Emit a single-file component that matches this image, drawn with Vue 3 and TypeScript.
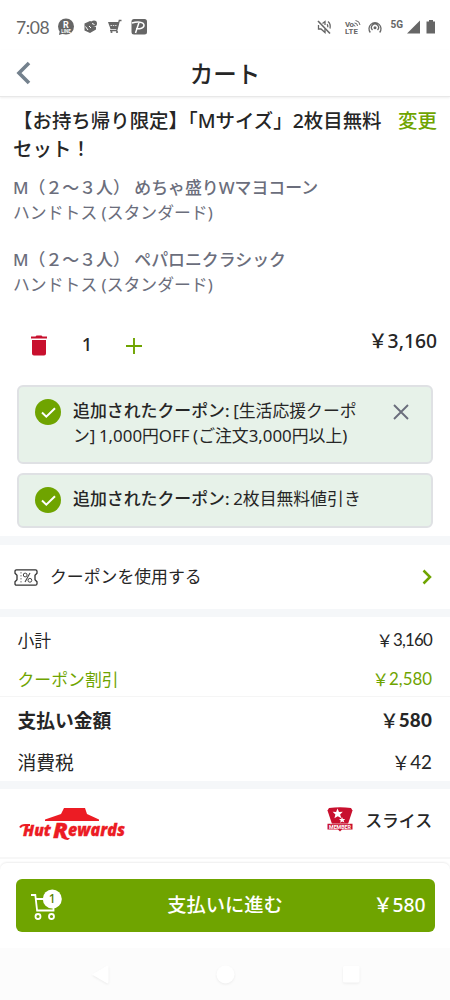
<script setup lang="ts">
interface Pizza { name: string; crust: string }
interface Coupon { id: number; text: string; removable: boolean }
interface Total { label: string; amount: string; kind: string }

const pizzas: Pizza[] = [
  { name: 'M（２～３人） めちゃ盛りWマヨコーン', crust: 'ハンドトス (スタンダード)' },
  { name: 'M（２～３人） ペパロニクラシック', crust: 'ハンドトス (スタンダード)' },
]
const coupons: Coupon[] = [
  { id: 1, text: '[生活応援クーポン] 1,000円OFF (ご注文3,000円以上)', removable: true },
  { id: 2, text: '2枚目無料値引き', removable: false },
]
const totals: Total[] = [
  { label: '小計', amount: '3,160', kind: 'subtotal' },
  { label: 'クーポン割引', amount: '2,580', kind: 'discount' },
  { label: '支払い金額', amount: '580', kind: 'due' },
  { label: '消費税', amount: '42', kind: 'tax' },
]
</script>

<template>
  <div class="screen">
    <div class="status">
      <span class="time">7:08</span>
      <svg class="s-left" width="92" height="18" viewBox="0 0 92 18">
        <circle cx="9" cy="8.5" r="8" fill="#666" />
        <path d="M3 12 2 17l6-2z" fill="#666" />
        <text x="9" y="9.5" class="r-mark" text-anchor="middle">R</text>
        <text x="9" y="14.5" class="r-sub" text-anchor="middle">LINE</text>
        <path d="M27.500 5.500 33 3l3 1v4l3 1v2.500l-6 3.500-5.500-2.500z" fill="#666" />
        <circle cx="37" cy="5.500" r="3" fill="#666" />
        <path d="M28.500 8.500l2.500 3.500M32 8l2 2M35 5.500l2.500 1" stroke="#fff" stroke-width="1" fill="none" />
        <path d="M51 4h11l-1.800 7H53.500z" fill="#666" />
        <path d="M64.500 2.500h-2.200l-2.600 10H53" stroke="#666" stroke-width="1.300" fill="none" />
        <path d="M53.500 7.500h6" stroke="#ddd" stroke-width="1" stroke-dasharray="1.500 .8" />
        <circle cx="54.500" cy="14" r="1.100" fill="#666" /><circle cx="60" cy="14" r="1.100" fill="#666" />
        <rect x="74.500" y="1" width="15.500" height="15.500" rx="2.500" fill="#666" />
        <path d="M75 5c5-1.500 12-1.500 12 2.300 0 3-4 3.700-8 3.500M82 4.500 78.500 15" fill="none" stroke="#fff" stroke-width="1.500" />
      </svg>
      <svg class="s-right" width="118" height="18" viewBox="0 0 118 18">
        <g fill="none" stroke="#666" stroke-width="1.300">
          <path d="M1 3 13 15.500" stroke-width="1.600" />
          <path d="M1.500 7v4h2.500l4 3.500V11M5.500 5.500 8 3.500V7M10 6.200q1 1 .8 3M11 3.500q3 2.500 2 7" />
          <path d="M53.300 14.500a6 6 0 1 1 9.400 0M55.500 12a3.500 3.500 0 1 1 5 0" />
          <path d="M37.500 5q3 0 3 3M38.500 2.500q4 .3 4.500 4.500M36.500 7q1.500 0 1.500 1.500" stroke-width="1" />
        </g>
        <circle cx="58" cy="9.800" r="1.500" fill="#666" />
        <text x="28" y="8.500" class="lte" textLength="9">Vo</text>
        <text x="28" y="15.800" class="lte" textLength="13">LTE</text>
        <text x="73.500" y="9.500" class="fiveg" textLength="12.500">5G</text>
        <path d="M90 15.500 103 2.500v13z" fill="#666" />
        <path d="M109.500 3.500h2.500V2h4v1.500h2v12h-8.500z" fill="#666" />
      </svg>
    </div>

    <header class="header">
      <svg class="back" width="16" height="24" viewBox="0 0 16 24"><path d="M14 2 4 12l10 10" fill="none" stroke="#74818d" stroke-width="3.600" /></svg>
      <h1>カート</h1>
    </header>

    <main>
      <section class="item">
        <div class="title-row">
          <h2>【お持ち帰り限定】「Mサイズ」2枚目無料<br>セット！</h2>
          <a class="change">変更</a>
        </div>
        <div v-for="pizza in pizzas" :key="pizza.name" class="pizza">
          <strong>{{ pizza.name }}</strong>
          <span>{{ pizza.crust }}</span>
        </div>
        <div class="quantity">
          <svg width="16" height="21" viewBox="0 0 16 21"><path d="M0 1.500h4.500L5.500.4h5l1 1.100H16v2H0zM1 5h14v13.500a2 2 0 0 1-2 2H3a2 2 0 0 1-2-2z" fill="#c8102e" /></svg>
          <span class="count">1</span>
          <svg class="plus" width="16" height="16" viewBox="0 0 16 16"><path d="M8 0v16M0 8h16" stroke="#6fa400" stroke-width="1.900" /></svg>
          <span class="price">￥3,160</span>
        </div>
      </section>

      <section class="coupons">
        <div v-for="coupon in coupons" :key="coupon.id" class="coupon">
          <svg class="check" width="26" height="26" viewBox="0 0 26 26"><circle cx="13" cy="13" r="13" fill="#6fa400" /><path d="M7 13.500l4.300 4.200L20 9.200" fill="none" stroke="#fff" stroke-width="2" /></svg>
          <p><b>追加されたクーポン:</b> {{ coupon.text }}</p>
          <svg v-if="coupon.removable" class="close" width="16" height="16" viewBox="0 0 16 16"><path d="M1 1l14 14M15 1 1 15" stroke="#6b6e7c" stroke-width="1.900" /></svg>
        </div>
      </section>

      <section class="use-coupon">
        <svg width="24" height="17" viewBox="0 0 24 17">
          <path d="M2.500.8h19q1.500 0 1.500 1.500v2l-2 2v4.400l2 2v2q0 1.500-1.500 1.500h-19Q1 16.200 1 14.700v-2l2-2V6.300l-2-2v-2Q1 .8 2.500.8z" fill="none" stroke="#333" stroke-width="1.300" stroke-linejoin="round" />
          <path d="M7 3v12" stroke="#777" stroke-width="1" stroke-dasharray="1.500 1.500" />
          <path d="M16 4 11 13" stroke="#444" stroke-width="1.100" />
          <circle cx="11.200" cy="6" r="1.900" fill="none" stroke="#444" /><circle cx="15.900" cy="11.300" r="1.900" fill="none" stroke="#444" />
        </svg>
        <span>クーポンを使用する</span>
        <svg class="chevron" width="10" height="16" viewBox="0 0 10 16"><path d="M1.500 1.500 8 8l-6.500 6.500" fill="none" stroke="#6fa400" stroke-width="2.500" /></svg>
      </section>

      <section class="totals">
        <div v-for="total in totals" :key="total.label" class="total" :class="total.kind">
          <span>{{ total.label }}</span>
          <span class="amount"><span class="yen">￥</span><span class="digits">{{ total.amount }}</span></span>
        </div>
      </section>

      <section class="rewards">
        <svg class="hut" width="108" height="34" viewBox="0 0 108 34">
          <path d="M45 1h21l2 6 12 5.500V14H26v-1.500L42 7z" fill="#ec1c24" />
          <g class="hut-text">
            <text x="4" y="29" font-size="16.500" textLength="28" lengthAdjust="spacingAndGlyphs">Hut</text>
            <text x="34" y="30.500" font-size="20.500" textLength="15" lengthAdjust="spacingAndGlyphs">R</text>
            <text x="49" y="29" font-size="17" textLength="57" lengthAdjust="spacingAndGlyphs">ewards</text>
          </g>
          <path d="M1 20.500q1.500-2.500 5-2.500h5" fill="none" stroke="#ec1c24" stroke-width="2" />
          <path d="M44 29q3 2.500 7 2l-2 2q-4 0-6.500-3z" fill="#ec1c24" />
        </svg>
        <svg class="badge" width="26" height="25" viewBox="0 0 26 25">
          <path d="M2 1q11-1.500 22 0l1.500 2.500-4.500 13.500h-16L.5 3.500z" fill="#c8102e" />
          <path d="M.5 16.800h25v5.700H15L13 24.500l-2-2H.5z" fill="#c8102e" />
          <path d="M10.500 1.500l1.500 3.400 3.800-.1-2.700 2.700 1.300 3.700-3.600-1.900-3.400 2 1-3.900-2.800-2.600 3.500.1zM15 10l.9 2 2.300-.1-1.600 1.700.8 2-2.200-1-2 1.100.5-2.300-1.700-1.500 2.200.1z" fill="#fff" />
          <path d="M3 16.800h20" stroke="#fff" stroke-width=".5" />
          <text x="2" y="21.900" class="member" textLength="22" lengthAdjust="spacingAndGlyphs">MEMBER</text>
        </svg>
        <span class="rank">スライス</span>
      </section>
    </main>

    <footer class="checkout">
      <button type="button">
        <svg class="cart" width="32" height="33" viewBox="0 0 32 33">
          <g fill="none" stroke="#fff" stroke-width="1.800"><path d="M0 7h4.300l1.800 15.500h16.400V17M5 11h11" /><circle cx="7" cy="28.500" r="2.500" /><circle cx="20.500" cy="28.500" r="2.500" /></g>
          <circle cx="21.300" cy="11" r="9.500" fill="#fff" />
          <text x="21.300" y="15.200" class="cart-count" text-anchor="middle">1</text>
        </svg>
        <span class="pay">支払いに進む</span>
        <span class="sum">￥580</span>
      </button>
    </footer>

    <nav class="nav">
      <svg width="270" height="22" viewBox="0 0 270 22">
        <g fill="#fff"><path d="M1 10.500 15.500 2q2-.8 2 1v15q0 2-2 1z" /><circle cx="134.500" cy="10.500" r="9" /><rect x="252" y="2" width="16.500" height="16.500" rx="1.500" /></g>
      </svg>
    </nav>
  </div>
</template>

<style>
body { margin: 0; background: #fff; }
</style>

<style scoped>
* { box-sizing: border-box; }
.screen { width: 450px; height: 1000px; overflow: hidden; display: flex; flex-direction: column; background: #fff; color: #262626; font-family: "Noto Sans", "Noto Sans CJK JP", sans-serif; font-size: 16.850px; }
svg { display: block; flex: none; overflow: visible; }
h1, h2, p { margin: 0; }
.status { height: 50px; padding: 18px 15px 0 16px; display: flex; align-items: flex-start; color: #666; }
.time { font: 17.500px/20px Lato, sans-serif; letter-spacing: -.4px; width: 41px; white-space: nowrap; }
.s-right { margin-left: auto; }
.r-mark { font: bold 9px Roboto, sans-serif; fill: #fff; }
.r-sub { font: bold 4.500px Roboto, sans-serif; fill: #fff; }
.lte { font: bold 7.800px Roboto, sans-serif; fill: #666; }
.fiveg { font: bold 10px Roboto, sans-serif; fill: #666; }
.header { height: 47px; display: grid; grid-template-columns: 50px 1fr 50px; align-items: center; border-bottom: 1px solid #e8e8e8; box-shadow: 0 1px 2px #0001; flex: none; }
.back { margin-left: 15px; margin-top: -2px; }
h1 { text-align: center; font-size: 23.500px; font-weight: 500; line-height: 47px; padding-top: 1px; }
.item { height: 288px; padding: 10px 13px 0 13px; display: flex; flex-direction: column; }
.title-row { display: flex; justify-content: space-between; height: 69px; white-space: nowrap; }
h2, .change { font-size: 19.450px; line-height: 28px; font-weight: 500; }
.change { color: #6fa400; }
.pizza { height: 72px; display: flex; flex-direction: column; color: #6b6e7c; line-height: 24.500px; }
.pizza strong { font-weight: 500; font-size: 16.900px; }
.quantity { display: flex; align-items: center; height: 49px; padding: 2px 0 0 18px; }
.count { width: 12px; margin: -4px 0 0 34px; text-align: center; font-size: 18.500px; font-weight: 500; }
.plus { margin-left: 33px; }
.price { margin: -11px 0 0 auto; font-size: 19.300px; font-weight: 500; }
.coupons { height: 151px; padding: 0 17px; display: flex; flex-direction: column; gap: 9px; }
.coupon { border: 2px solid #dfe1e4; border-radius: 6px; background: #e7f2e9; padding: 12px 20px 13px 16px; display: flex; align-items: flex-start; height: 79px; }
.coupon:last-child { height: 55px; }
.coupon p { width: 300px; margin-left: 12px; line-height: 24.700px; word-spacing: -.8px; }
.coupon b { font-weight: 500; font-size: 16.900px; }
.close { margin: 5px 2px 0 auto; }
.use-coupon { height: 81px; border: solid #f5f7f9; border-width: 9px 0 8px; padding: 0 18px 0 14px; display: flex; align-items: center; }
.use-coupon span { margin: -3px 0 0 12px; }
.chevron { margin-left: auto; }
.totals { height: 172px; border-bottom: 8px solid #f5f7f9; display: flex; flex-direction: column; }
.total { display: flex; align-items: center; justify-content: space-between; padding: 0 18px 2px 17.500px; height: 43px; }
.subtotal { height: 45px; padding-bottom: 0; }
.discount { height: 35px; color: #6fa400; border-bottom: 1px solid #f5f5f5; }
.due, .tax { font-size: 18.800px; }
.due { height: 47px; font-weight: 700; }
.tax { height: 37px; }
.amount { display: flex; align-items: center; }
.digits { font-family: Lato, sans-serif; }
.subtotal .digits { letter-spacing: -.8px; }
.due .digits { font-weight: 900; letter-spacing: .2px; }
.due .yen { font-weight: 500; }
.rewards { height: 70px; border-bottom: 2px solid #f7f7f7; padding: 18px 18px 0 19px; display: flex; align-items: flex-start; }
.hut-text { font-family: "Open Sans", sans-serif; font-style: italic; font-weight: 800; fill: #ec1c24; stroke: #ec1c24; stroke-width: .3px; }
.badge { margin-left: auto; }
.member { font: bold 5.500px Roboto, sans-serif; fill: #fff; }
.rank { margin: 1px 0 0 12px; font-weight: 500; line-height: 26px; }
.checkout { flex: none; height: 85px; margin-top: 4px; border-radius: 7px 7px 0 0; box-shadow: 0 -1px 2px #00000012; padding: 16px 15.500px; }
button { width: 100%; height: 53px; border: 0; border-radius: 6px; background: #6fa400; color: #fff; display: grid; grid-template-columns: 100px 1fr 100px; align-items: center; padding: 0 9px 0 15px; font: 500 19.300px "Noto Sans", "Noto Sans CJK JP", sans-serif; }
.cart { margin-top: -3px; }
.cart-count { font: 500 12px "Noto Sans", sans-serif; fill: #568000; }
.pay { text-align: center; padding: 0 6px 3px 0; }
.sum { text-align: right; padding-bottom: 3px; }
.nav { flex: 1; background: #fcfcfc; padding: 16px 0 0 91px; }
.nav g { filter: drop-shadow(0 1px 1px #0001); }
</style>
